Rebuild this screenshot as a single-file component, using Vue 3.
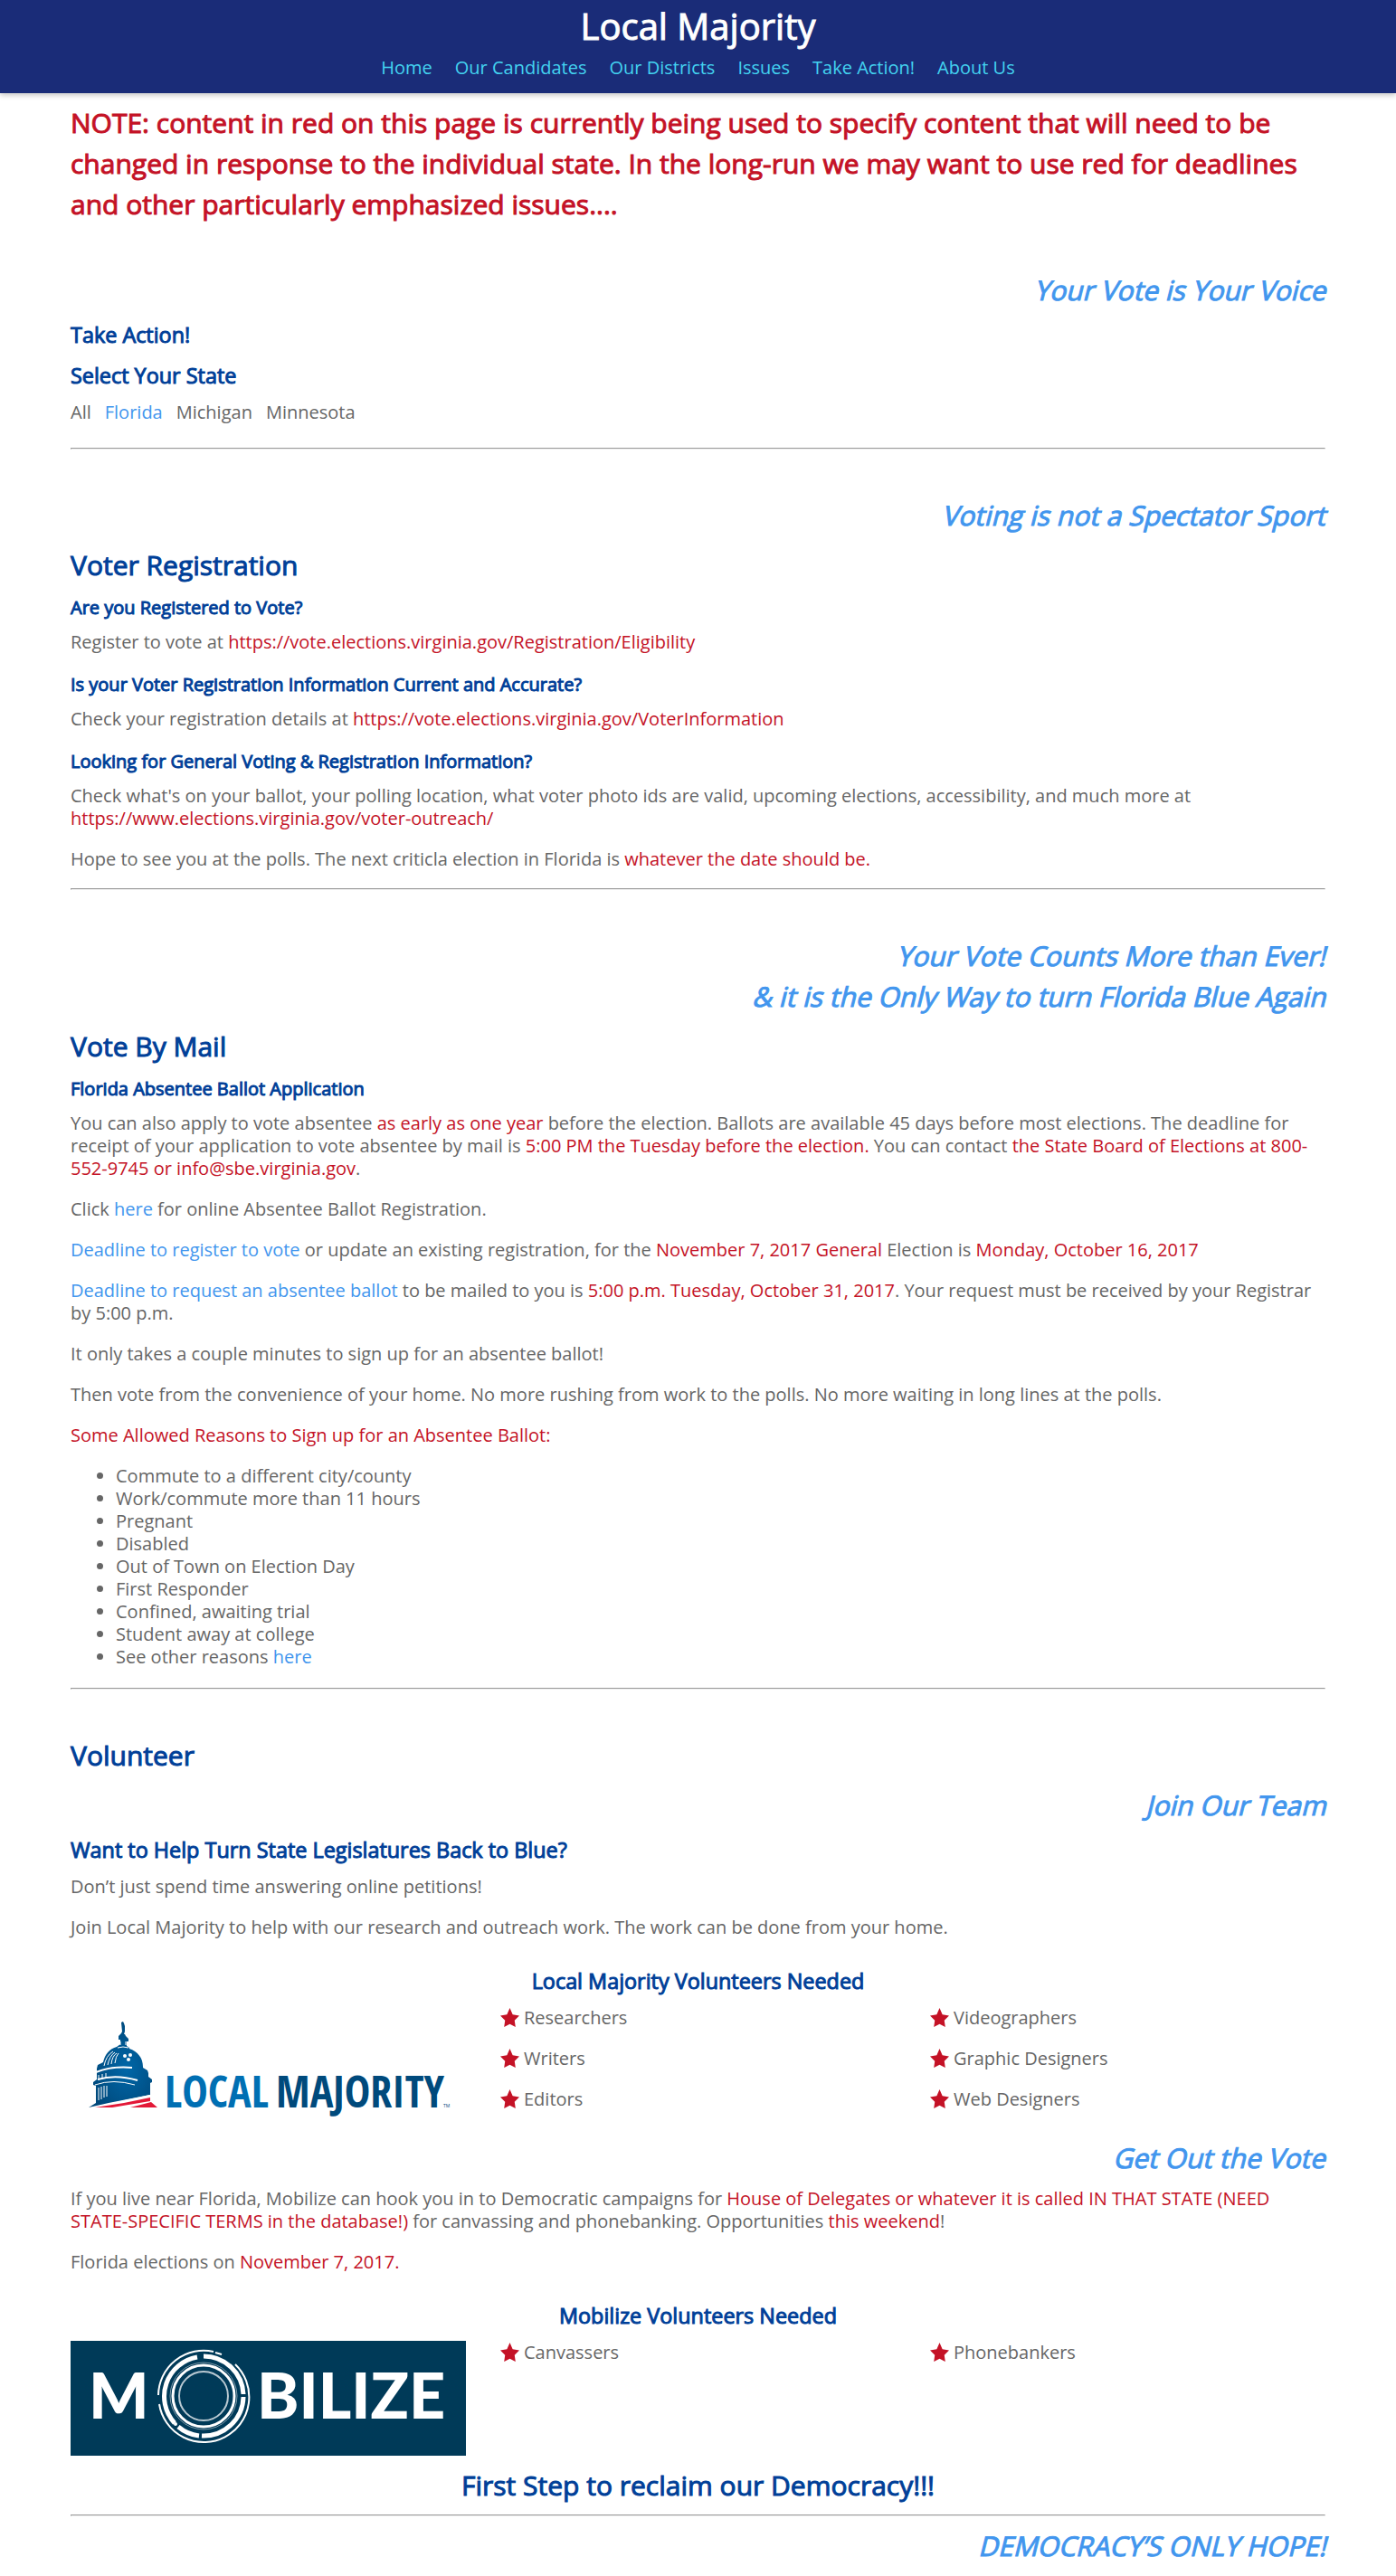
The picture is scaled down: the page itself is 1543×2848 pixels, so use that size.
<script setup>
const navLinks = ['Home', 'Our Candidates', 'Our Districts', 'Issues', 'Take Action!', 'About Us']

const states = ['All', 'Florida', 'Michigan', 'Minnesota']
const selectedState = 'Florida'

const reasons = [
  'Commute to a different city/county',
  'Work/commute more than 11 hours',
  'Pregnant',
  'Disabled',
  'Out of Town on Election Day',
  'First Responder',
  'Confined, awaiting trial',
  'Student away at college',
]

const localRoles = [
  ['Researchers', 'Writers', 'Editors'],
  ['Videographers', 'Graphic Designers', 'Web Designers'],
]
const mobilizeRoles = [['Canvassers'], ['Phonebankers']]
</script>

<template>
  <header class="site-header">
    <h1>Local Majority</h1>
    <nav>
      <a v-for="link in navLinks" :key="link" href="#">{{ link }}</a>
    </nav>
  </header>

  <main class="page">
    <h2 class="red">
      NOTE: content in red on this page is currently being used to specify content that will need to be
      changed in response to the individual state. In the long-run we may want to use red for deadlines and
      other particularly emphasized issues....
    </h2>

    <section class="first">
      <h2 class="tagline"><span>Your Vote is Your Voice</span></h2>
      <h3>Take Action!</h3>
      <h3>Select Your State</h3>
      <div class="states">
        <a
          v-for="state in states"
          :key="state"
          href="#"
          :class="{ selected: state === selectedState }"
        >{{ state }}</a>
      </div>
    </section>
    <hr />

    <section>
      <h2 class="tagline"><span>Voting is not a Spectator Sport</span></h2>
      <h2>Voter Registration</h2>
      <h4>Are you Registered to Vote?</h4>
      <p>Register to vote at <a class="red" href="#">https://vote.elections.virginia.gov/Registration/Eligibility</a></p>
      <h4>Is your Voter Registration Information Current and Accurate?</h4>
      <p>Check your registration details at <a class="red" href="#">https://vote.elections.virginia.gov/VoterInformation</a></p>
      <h4>Looking for General Voting &amp; Registration Information?</h4>
      <p>
        Check what's on your ballot, your polling location, what voter photo ids are valid, upcoming elections,
        accessibility, and much more at <a class="red" href="#">https://www.elections.virginia.gov/voter-outreach/</a>
      </p>
      <p>
        Hope to see you at the polls. The next criticla election in Florida is
        <span class="red">whatever the date should be.</span>
      </p>
    </section>
    <hr />

    <section>
      <h2 class="tagline">
        <span>Your Vote Counts More than Ever!</span>
        <span>&amp; it is the Only Way to turn Florida Blue Again</span>
      </h2>
      <h2>Vote By Mail</h2>
      <h4>Florida Absentee Ballot Application</h4>
      <p>
        You can also apply to vote absentee <span class="red">as early as one year</span> before the election.
        Ballots are available 45 days before most elections. The deadline for receipt of your application to vote
        absentee by mail is <span class="red">5:00 PM the Tuesday before the election.</span> You can contact
        <span class="red">the State Board of Elections at 800-552-9745 or info@sbe.virginia.gov</span>.
      </p>
      <p>Click <a href="#">here</a> for online Absentee Ballot Registration.</p>
      <p>
        <a href="#">Deadline to register to vote</a> or update an existing registration, for the
        <span class="red">November 7, 2017 General</span> Election is
        <span class="red">Monday, October 16, 2017</span>
      </p>
      <p>
        <a href="#">Deadline to request an absentee ballot</a> to be mailed to you is
        <span class="red">5:00 p.m. Tuesday, October 31, 2017</span>. Your request must be received by your
        Registrar by 5:00 p.m.
      </p>
      <p>It only takes a couple minutes to sign up for an absentee ballot!</p>
      <p>
        Then vote from the convenience of your home. No more rushing from work to the polls. No more waiting in
        long lines at the polls.
      </p>
      <p class="red">Some Allowed Reasons to Sign up for an Absentee Ballot:</p>
      <ul class="reasons">
        <li v-for="reason in reasons" :key="reason">{{ reason }}</li>
        <li>See other reasons <a href="#">here</a></li>
      </ul>
    </section>
    <hr />

    <section>
      <h2>Volunteer</h2>
      <h2 class="tagline"><span>Join Our Team</span></h2>
      <h3>Want to Help Turn State Legislatures Back to Blue?</h3>
      <p>Don’t just spend time answering online petitions!</p>
      <p>
        Join Local Majority to help with our research and outreach work. The work can be done from your home.
      </p>

      <h3 class="centered">Local Majority Volunteers Needed</h3>
      <div class="team">
        <svg class="logo" viewBox="0 0 437 127" role="img" aria-label="Local Majority">
          <defs>
            <radialGradient id="dome" cx="0.6" cy="0.55" r="0.6">
              <stop offset="0" stop-color="#0067a8" />
              <stop offset="1" stop-color="#00487a" />
            </radialGradient>
          </defs>
          <path
            fill="url(#dome)"
            d="M56 18l2-1 1 2 1 3v6l-1 3h1l1 2 3 3v3h-2v5l3 2v1c9 3 15 10 15 20v1l5 3 1 3v4l4 3v3l-2 1v13L42 107l-22 5 8-5V88l-3-1v-3l4-3V69l1-4 6-3c2-9 7-15 15-17l4-3v-5h-2v-4l3-3 1-2z"
          />
          <g fill="none" stroke="#fff" stroke-width="1">
            <path d="M37 66q2-11 10-16M41 65q2-10 8-14M45 64q1-9 6-12M49 63q1-8 4-11M52 46q6-2 12 0M55 39v4M61 39v4" />
            <path stroke-width="2" d="M28 73q18-7 40-5M30 81q20-6 44 1" />
            <path d="M27 87q20-7 44 0M31 76v6M35 75v6M39 74v6" />
            <path d="M31 90v14M34 89v14M37 88v13M40 88v12" />
          </g>
          <g fill="#fff">
            <circle cx="60" cy="55" r="2" />
            <circle cx="66" cy="54" r="2" />
            <circle cx="64" cy="59" r="2" />
          </g>
          <path fill="#fff" d="M18 113L92 97v5L38 113z" />
          <path fill="#e31837" d="M27 112Q58 108 88 101v4L46 112zM66 112l23-6 7 6z" />
          <text class="wordmark local" x="104" y="112">LOCAL</text>
          <text class="wordmark majority" x="227" y="112">MAJORITY</text>
          <text class="mark" x="412" y="112">TM</text>
        </svg>
        <div v-for="(column, i) in localRoles" :key="i">
          <p v-for="role in column" :key="role" class="role">
            <svg class="star" viewBox="0 0 20 20" aria-hidden="true">
              <path d="M10 0l3 7 7 1-5 5 1 7-6-3-6 3 1-7-5-5 7-1z" />
            </svg>
            {{ role }}
          </p>
        </div>
      </div>

      <h2 class="tagline"><span>Get Out the Vote</span></h2>
      <p>
        If you live near Florida, Mobilize can hook you in to Democratic campaigns for
        <span class="red">House of Delegates or whatever it is called IN THAT STATE (NEED STATE-SPECIFIC TERMS in
        the database!)</span> for canvassing and phonebanking. Opportunities <a class="red" href="#">this weekend</a>!
      </p>
      <p>Florida elections on <span class="red">November 7, 2017.</span></p>

      <h3 class="centered">Mobilize Volunteers Needed</h3>
      <div class="team">
        <svg class="logo" viewBox="0 0 437 127" role="img" aria-label="Mobilize">
          <rect width="437" height="127" fill="#003a58" />
          <text class="mobilize" x="20" y="86">M</text>
          <g fill="none" stroke="#fff">
            <circle cx="147" cy="61" r="27" stroke-width="2" stroke="#b9c9d2" />
            <circle cx="147" cy="61" r="34" stroke-width="3" />
            <circle cx="147" cy="61" r="37" stroke-width="1" stroke="#7d99a8" />
            <path stroke-width="5" d="M147 17A44 44 0 0 1 191 59M191 62A44 44 0 0 1 145 105M142 105A44 44 0 0 1 119 95M115 91A44 44 0 0 1 140 18" />
            <path stroke-width="2" d="M97 60A50 50 0 0 1 158 12M160 13L167 15M182 26A50 50 0 1 1 98 70" />
            <circle cx="116" cy="92" r="1" stroke-width="2" />
          </g>
          <text class="mobilize" x="206" y="86">BILIZE</text>
        </svg>
        <div v-for="(column, i) in mobilizeRoles" :key="i">
          <p v-for="role in column" :key="role" class="role">
            <svg class="star" viewBox="0 0 20 20" aria-hidden="true">
              <path d="M10 0l3 7 7 1-5 5 1 7-6-3-6 3 1-7-5-5 7-1z" />
            </svg>
            {{ role }}
          </p>
        </div>
      </div>
      <h2 class="centered">First Step to reclaim our Democracy!!!</h2>
    </section>
    <hr class="last" />
    <h2 class="tagline"><span>DEMOCRACY’S ONLY HOPE!</span></h2>
  </main>
</template>

<style>
body {
  margin: 0;
  background: #fff;
  color: #666;
  font-family: "Open Sans", sans-serif;
  font-size: 20px;
  line-height: 25px;
}
</style>

<style scoped>
.site-header {
  padding-bottom: 16px;
  background: #1a2c78;
  box-shadow: 0 2px 6px rgba(0, 0, 0, 0.25);
  text-align: center;
}

h1,
h2,
h3,
h4 {
  margin: 0 0 10px;
  color: #003f98;
  font-weight: 400;
  line-height: 35px;
  -webkit-text-stroke: 1px currentColor;
}

h1 {
  margin: 0;
  color: #fff;
  font-size: 40px;
  line-height: 58px;
}

h2 {
  font-size: 30px;
  line-height: 45px;
}

h4 {
  font-size: 20px;
  line-height: 30px;
}

nav {
  display: flex;
  justify-content: center;
  gap: 25px;
  margin-top: 4px;
}

nav a {
  color: #43d3f0;
}

a {
  color: #4296ee;
  text-decoration: none;
}

.page {
  margin: 0 78px;
  padding: 10px 0 1px;
}

section {
  padding-top: 50px;
}

section.first {
  padding-top: 40px;
}

p {
  margin: 0 0 20px;
}

hr {
  margin: 0;
  border: 1px solid #9a9a9a;
  border-right-color: #eee;
  border-bottom-color: #eee;
}

hr.last {
  margin-bottom: 10px;
}

h2.tagline {
  display: flex;
  flex-direction: column;
  align-items: flex-end;
  color: #4296ee;
}

/* Slants the upright face about its baseline */
.tagline span {
  transform: skewX(-14deg);
  transform-origin: 50% 75%;
}

.centered {
  text-align: center;
}

h3.centered {
  margin-top: 30px;
}

.red,
a.red {
  color: #c41226;
}

.states {
  display: flex;
  gap: 15px;
  margin-bottom: 27px;
}

.states a {
  color: #666;
}

.states a.selected {
  color: #4296ee;
}

.reasons {
  margin: 0 0 22px;
  padding-left: 50px;
}

.team {
  display: grid;
  grid-template-columns: repeat(3, 1fr);
  align-items: start;
  column-gap: 38px;
  margin-bottom: 10px;
}

.logo {
  display: block;
  width: 100%;
}

.role {
  display: flex;
  align-items: center;
  gap: 5px;
}

.star {
  width: 21px;
  height: 21px;
  fill: #c41226;
}

.wordmark {
  font-family: "Open Sans Condensed", "Roboto Condensed", "Liberation Sans Narrow", "Open Sans", sans-serif;
  font-size: 48px;
  font-weight: 700;
}

.local {
  fill: #006fb3;
}

.majority {
  fill: #004a7c;
}

.mark {
  fill: #004a7c;
  font-size: 5px;
}

.mobilize {
  fill: #fff;
  font-family: Lato, sans-serif;
  font-size: 70px;
  font-weight: 900;
}
</style>
